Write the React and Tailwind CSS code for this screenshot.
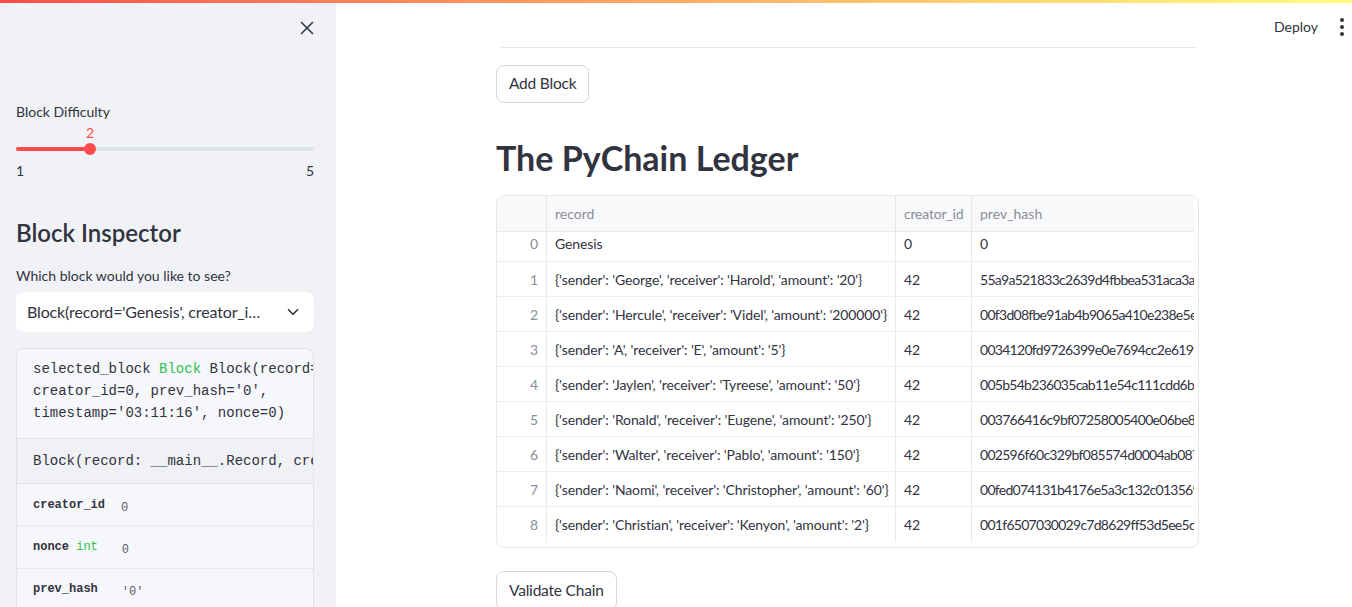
import React from 'react';
import { X, ChevronDown } from 'lucide-react';

const rows = [
  ['0', 'Genesis', '0', '0'],
  ['1', "{'sender': 'George', 'receiver': 'Harold', 'amount': '20'}", '42', '55a9a521833c2639d4fbbea531aca3a8f1b2c7d90e4a5b6c'],
  ['2', "{'sender': 'Hercule', 'receiver': 'Videl', 'amount': '200000'}", '42', '00f3d08fbe91ab4b9065a410e238e5e1c4d7a2b3f9e8d6c5'],
  ['3', "{'sender': 'A', 'receiver': 'E', 'amount': '5'}", '42', '0034120fd9726399e0e7694cc2e619f3a8b1c5d2e7f4a9b0'],
  ['4', "{'sender': 'Jaylen', 'receiver': 'Tyreese', 'amount': '50'}", '42', '005b54b236035cab11e54c111cdd6b0e2a4f7c8d9b1e3a5f'],
  ['5', "{'sender': 'Ronald', 'receiver': 'Eugene', 'amount': '250'}", '42', '003766416c9bf07258005400e06be83c1d2f5a7b9e0c4d6a'],
  ['6', "{'sender': 'Walter', 'receiver': 'Pablo', 'amount': '150'}", '42', '002596f60c329bf085574d0004ab0872e1c3a5b7d9f0e2c4'],
  ['7', "{'sender': 'Naomi', 'receiver': 'Christopher', 'amount': '60'}", '42', '00fed074131b4176e5a3c132c01356921d4b6e8f0a2c3e5b'],
  ['8', "{'sender': 'Christian', 'receiver': 'Kenyon', 'amount': '2'}", '42', '001f6507030029c7d8629ff53d5ee5d3a1b4c6e8f0d2a7c9'],
];

export default function App() {
  return (
    <div className="relative flex h-[607px] w-[1352px] overflow-hidden bg-white text-[#31333f] font-['Lato','Liberation_Sans',sans-serif]">
      <div className="absolute left-0 top-0 z-10 h-[3px] w-full bg-gradient-to-r from-[#ff4b4b] to-[#fffd80]" />

      {/* sidebar */}
      <aside className="flex w-[336px] shrink-0 flex-col bg-[#f0f2f6] pl-4 pr-[22px]">
        <div className="-mr-[6px] flex justify-end pt-[17px] pr-[2px]">
          <X size={22} strokeWidth={1.6} className="text-[#31333f]" />
        </div>
        <div className="mt-[64px] text-[14px] leading-[18px]">Block Difficulty</div>
        <div className="relative mt-[3px] h-[52px]">
          <div className="absolute left-[68px] top-0 w-[12px] text-center text-[14px] leading-[18px] text-[#ff4b4b]">2</div>
          <div className="absolute left-0 right-0 top-[23px] h-[4px] rounded-full bg-[#dee1e7]" />
          <div className="absolute left-0 top-[23px] h-[4px] w-[74px] rounded-full bg-[#ff4b4b]" />
          <div className="absolute left-[68px] top-[19px] h-[12px] w-[12px] rounded-full bg-[#ff4b4b]" />
          <div className="absolute left-0 top-[38px] text-[14px] leading-[18px]">1</div>
          <div className="absolute right-0 top-[38px] text-[14px] leading-[18px]">5</div>
        </div>
        <div className="mt-[42px] text-[24px] font-semibold leading-[30px]">Block Inspector</div>
        <div className="mt-[19px] text-[14px] leading-[18px]">Which block would you like to see?</div>
        <div className="mt-[7px] flex h-[41px] items-center justify-between rounded-lg bg-white pl-[11px] pr-[12px] text-[16px]">
          <span className="truncate tracking-[-0.15px]">Block(record='Genesis', creator_i…</span>
          <ChevronDown size={18} strokeWidth={2.2} className="shrink-0" />
        </div>
        <div className="mt-[16px] w-[298px] overflow-hidden rounded-t-lg border border-b-0 border-[#e1e3e8] bg-[#f6f7fa] font-['Liberation_Mono',monospace] text-[14px]">
          <div className="whitespace-nowrap px-4 pt-[9px] pb-[14px] leading-[22px]">
            <div>selected_block <span className="text-[#2fbf4f]">Block</span> Block(record='Genesis',</div>
            <div>creator_id=0, prev_hash='0',</div>
            <div>timestamp='03:11:16', nonce=0)</div>
          </div>
          <div className="whitespace-nowrap border-y border-[#e1e3e8] bg-[#eff1f5] px-4 py-[11px] leading-[22px]">
            Block(record: __main__.Record, creator_id: int)
          </div>
          <div className="flex h-[42px] items-center gap-[16px] border-b border-dotted border-[#d5d8de] px-4">
            <span className="text-[12px] font-bold">creator_id</span>
            <span className="mt-[6px] text-[12px] text-[#5b5d6a]">0</span>
          </div>
          <div className="flex h-[43px] items-center gap-[24px] border-b border-dotted border-[#d5d8de] px-4">
            <span className="text-[12px] font-bold">nonce <span className="font-normal text-[#2fbf4f]">int</span></span>
            <span className="mt-[6px] text-[12px] text-[#5b5d6a]">0</span>
          </div>
          <div className="flex h-[40px] items-center gap-[24px] px-4">
            <span className="text-[12px] font-bold">prev_hash</span>
            <span className="mt-[6px] text-[12px] text-[#5b5d6a]">'0'</span>
          </div>
        </div>
      </aside>

      {/* main */}
      <main className="relative flex-1">
        <div className="absolute right-[8px] top-[17px] flex items-center gap-[22px]">
          <span className="text-[14px] leading-[20px]">Deploy</span>
          <div className="flex flex-col gap-[3px]">
            <span className="h-[4px] w-[4px] rounded-full bg-[#31333f]" />
            <span className="h-[4px] w-[4px] rounded-full bg-[#31333f]" />
            <span className="h-[4px] w-[4px] rounded-full bg-[#31333f]" />
          </div>
        </div>

        <div className="ml-[160px] w-[704px]">
          <div className="ml-[5px] mt-[47px] h-px w-[695px] bg-[#e6e8ec]" />
          <button className="mt-[17px] h-[38px] rounded-lg border border-[#d5d7dd] bg-white px-[12px] text-[15.5px] tracking-[-0.2px]">Add Block</button>
          <h1 className="mt-[34px] text-[34px] font-bold leading-[42px]">The PyChain Ledger</h1>
          <div className="mt-[16px] h-[353px] w-[703px] overflow-hidden rounded-lg border border-[#e6e8ec] text-[14px]">
            <div className="w-[697px] overflow-hidden">
              <div className="flex h-[36px] border-b border-[#e6e8ec] bg-[#f8f9fb] text-[#8b8d98]">
                <div className="w-[50px] shrink-0 border-r border-[#e6e8ec]" />
                <div className="flex w-[349px] shrink-0 items-center border-r border-[#e6e8ec] px-2">record</div>
                <div className="flex w-[76px] shrink-0 items-center border-r border-[#e6e8ec] px-2 tracking-[-0.2px]">creator_id</div>
                <div className="flex w-[240px] shrink-0 items-center px-2">prev_hash</div>
              </div>
              {rows.map((r, i) => (
                <div key={r[0]} className={`flex border-b border-[#eaecef] ${i === 0 ? 'h-[30px] items-start' : 'h-[35px]'} ${i === rows.length - 1 ? 'border-b-0' : ''}`}>
                  <div className="flex w-[50px] shrink-0 items-center justify-end self-stretch border-r border-[#e6e8ec] pr-[8px] text-[#8b8d98]"><span className={i === 0 ? '-mt-[7px]' : ''}>{r[0]}</span></div>
                  <div className="flex w-[349px] shrink-0 items-center self-stretch whitespace-nowrap border-r border-[#e6e8ec] px-2 tracking-[-0.12px]"><span className={i === 0 ? '-mt-[7px]' : ''}>{r[1]}</span></div>
                  <div className="flex w-[76px] shrink-0 items-center self-stretch border-r border-[#e6e8ec] px-2"><span className={i === 0 ? '-mt-[7px]' : ''}>{r[2]}</span></div>
                  <div className="flex w-[240px] shrink-0 items-center self-stretch overflow-hidden whitespace-nowrap px-2 tracking-[-0.72px]"><span className={i === 0 ? '-mt-[7px]' : ''}>{r[3]}</span></div>
                </div>
              ))}
            </div>
          </div>
          <button className="mt-[23px] h-[40px] rounded-lg border border-[#d5d7dd] bg-white px-[12px] text-[15.5px] tracking-[-0.2px]">Validate Chain</button>
        </div>
      </main>
    </div>
  );
}
